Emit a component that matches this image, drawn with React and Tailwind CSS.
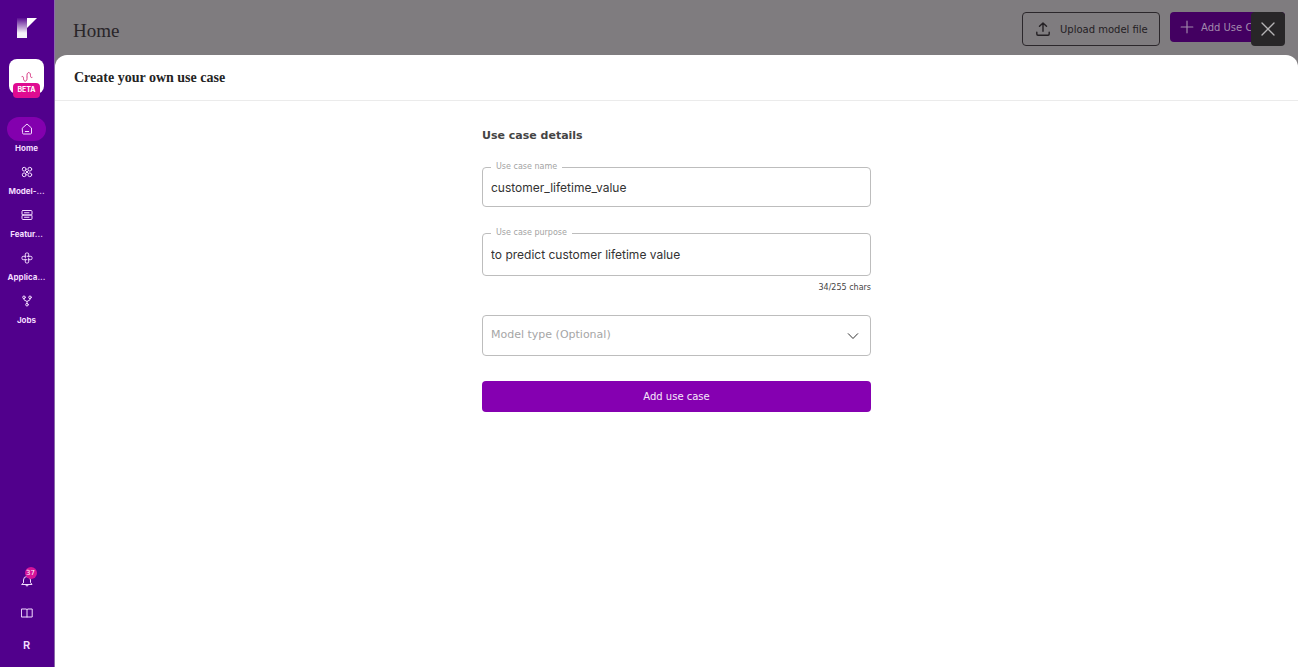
import { useState } from 'react';

const fonts = {
  sans: "font-[Inter,'Liberation_Sans',sans-serif]",
  serif: "font-['Liberation_Serif',serif]",
  wide: "font-['DejaVu_Sans',sans-serif]",
};

function Icon({ size = 12, strokeWidth = 1, children, className = '' }) {
  return (
    <svg
      width={size}
      height={size}
      viewBox="0 0 12 12"
      fill="none"
      stroke="currentColor"
      strokeWidth={strokeWidth}
      strokeLinecap="round"
      strokeLinejoin="round"
      className={className}
      aria-hidden="true"
    >
      {children}
    </svg>
  );
}

function Logo() {
  return (
    <svg width="20" height="21" viewBox="0 0 20 21" aria-hidden="true">
      <defs>
        <linearGradient id="logo-fade" x1="0" y1="0" x2="0" y2="1">
          <stop offset="0" stopColor="#fff" stopOpacity="0.05" />
          <stop offset="0.75" stopColor="#fff" stopOpacity="0.95" />
        </linearGradient>
      </defs>
      <path d="M0 1h10v20H0z" fill="url(#logo-fade)" />
      <path d="M10 1h10L10 11z" fill="#fff" />
    </svg>
  );
}

const navItems = [
  {
    label: 'Home',
    active: true,
    icon: (
      <>
        <path d="M1.500 5 6 1l4.500 4v5a1 1 0 0 1-1 1h-7a1 1 0 0 1-1-1z" />
        <path d="M4.300 8.500h3.400" />
      </>
    ),
  },
  {
    label: 'Model-...',
    icon: (
      <>
        <circle cx="3.200" cy="3.200" r="1.900" />
        <circle cx="8.800" cy="3.200" r="1.900" />
        <circle cx="3.200" cy="8.800" r="1.900" />
        <circle cx="8.800" cy="8.800" r="1.900" />
        <path d="M4.600 4.600l2.800 2.800M7.400 4.600 4.600 7.400" />
      </>
    ),
  },
  {
    label: 'Featur...',
    icon: (
      <>
        <rect x="1" y="1.500" width="10" height="4.500" rx="1" />
        <rect x="1" y="6" width="10" height="4.500" rx="1" />
        <path d="M3.500 3.750h4.500M3.500 8.250h4.500" />
      </>
    ),
  },
  {
    label: 'Applica...',
    icon: (
      <>
        <path d="M4.300 6V2.200A1.200 1.200 0 0 1 5.500 1h1a1.200 1.200 0 0 1 1.200 1.200v2.100" />
        <path d="M6 4.300h3.800A1.200 1.200 0 0 1 11 5.500v1a1.200 1.200 0 0 1-1.200 1.200H7.700" />
        <path d="M7.700 6v3.800A1.200 1.200 0 0 1 6.500 11h-1a1.200 1.200 0 0 1-1.200-1.200V7.700" />
        <path d="M6 7.700H2.200A1.200 1.200 0 0 1 1 6.500v-1a1.200 1.200 0 0 1 1.200-1.200h2.100" />
      </>
    ),
  },
  {
    label: 'Jobs',
    icon: (
      <>
        <circle cx="3" cy="2.300" r="1.300" />
        <circle cx="9" cy="2.300" r="1.300" />
        <circle cx="6" cy="9.700" r="1.300" />
        <path d="M3 3.600v1.200L6 6.500l3-1.700V3.600M6 6.500v1.900" />
      </>
    ),
  },
];

function NavItem({ label, icon, active }) {
  return (
    <a href="#" className="flex flex-col items-center gap-px" aria-current={active ? 'page' : undefined}>
      <span className={`flex h-6 w-[39px] items-center justify-center rounded-full ${active ? 'bg-[#8300ae]' : ''}`}>
        <Icon>{icon}</Icon>
      </span>
      <span className="text-[8px] leading-3 font-bold whitespace-nowrap">{label}</span>
    </a>
  );
}

function Sidebar() {
  return (
    <aside className="flex w-[55px] shrink-0 flex-col items-center border-r border-[#8a6aa8] bg-[#51008c] pt-[17px] pr-px pb-4 text-[#f3dcff]">
      <Logo />
      <button type="button" aria-label="Beta" className="relative mt-[21px] flex h-[35px] w-[35px] items-center justify-center rounded-lg bg-white text-[#d6307e]">
        <Icon>
          <path d="M1 5.500c1-.5 1.500.5 1.500 2 0 3.500 3.500 3.500 3.500 0v-3c0-4 3.500-4 3.500 0 0 1.500.5 2.500 1.500 2" />
        </Icon>
        <span className="absolute top-6 left-1 flex h-[15px] w-[27px] items-center justify-center rounded bg-[#df0b91] text-[7px] font-bold text-white">
          BETA
        </span>
      </button>
      <nav className="mt-[23px] flex flex-col gap-[6px]">
        {navItems.map((item) => (
          <NavItem key={item.label} {...item} />
        ))}
      </nav>
      <div className="mt-auto flex flex-col items-center gap-5">
        <button type="button" aria-label="Notifications" className="relative">
          <Icon>
            <path d="M1 9.500h10L9.500 7.500V5a3.500 3.500 0 0 0-7 0v2.500zM4.700 9.700a1.300 1.300 0 0 0 2.600 0M6 .8v.7" />
          </Icon>
          <span className={`${fonts.wide} absolute -top-2 left-1 flex h-3 w-3 items-center justify-center rounded-full bg-[#d4149a] text-[7px] text-white`}>
            37
          </span>
        </button>
        <button type="button" aria-label="Documentation">
          <Icon>
            <path d="M.8 2H5a1 1 0 0 1 1 1 1 1 0 0 1 1-1h4.200v8H.8zM6 3v7" />
          </Icon>
        </button>
        <button type="button" className="text-[11px] leading-3 font-semibold">R</button>
      </div>
    </aside>
  );
}

function TopBar() {
  return (
    <header className="relative flex h-[55px] shrink-0 items-start justify-between pt-3 pr-[13px] pl-[18px]">
      <h1 className={`${fonts.serif} text-[19px] leading-[38px] text-[#292529]`}>Home</h1>
      <div className={`${fonts.wide} flex items-start gap-[10px] text-[10px]`}>
        <button type="button" className="flex h-[34px] w-[138px] items-center gap-[10px] rounded border border-[#2b272b] pl-[13px] whitespace-nowrap text-[#242024]">
          <Icon size={14} strokeWidth={1.2} className="shrink-0">
            <path d="M6 8V1M3 3.700 6 .8l3 2.900M.7 8.700v1.600a1 1 0 0 0 1 1h8.600a1 1 0 0 0 1-1V8.700" />
          </Icon>
          Upload model file
        </button>
        <button type="button" className="flex h-[30px] w-[115px] items-center gap-[7px] overflow-hidden rounded bg-[#430061] pl-[10px] whitespace-nowrap text-[#a28aac]">
          <Icon size={14} className="shrink-0">
            <path d="M6 1v10M1 6h10" />
          </Icon>
          Add Use Case
        </button>
      </div>
      <button type="button" aria-label="Close" className="absolute top-3 right-[13px] flex h-[34px] w-[34px] items-center justify-center rounded bg-[#282628] text-[#b5b3b5]">
        <Icon size={16}>
          <path d="M1.500 1.500l9 9M10.500 1.500l-9 9" />
        </Icon>
      </button>
    </header>
  );
}

function Field({ id, label, height, value, onChange }) {
  return (
    <fieldset className="min-w-0 rounded border border-[#bdbdbd] px-2">
      <legend className={`${fonts.wide} h-[10px] px-[5px] text-[8px] leading-[10px] text-[#a3a3a3]`}>
        <label htmlFor={id}>{label}</label>
      </legend>
      <input
        id={id}
        value={value}
        onChange={(e) => onChange(e.target.value)}
        className={`block w-full bg-transparent pb-1 text-[12px] text-[#333] outline-none ${height}`}
      />
    </fieldset>
  );
}

function UseCaseForm() {
  const [name, setName] = useState('customer_lifetime_value');
  const [purpose, setPurpose] = useState('to predict customer lifetime value');

  return (
    <form className="mx-auto flex w-full max-w-[389px] flex-col pt-[26px]" onSubmit={(e) => e.preventDefault()}>
      <h3 className={`${fonts.wide} mb-[17px] text-[11px] leading-[18px] font-bold text-[#444]`}>Use case details</h3>
      <div className="flex flex-col gap-[21px]">
        <Field id="name" label="Use case name" height="h-[34px]" value={name} onChange={setName} />
        <Field id="purpose" label="Use case purpose" height="h-[37px]" value={purpose} onChange={setPurpose} />
      </div>
      <p className={`${fonts.wide} mt-[6px] text-right text-[8px] leading-3 text-[#444]`}>{purpose.length}/255 chars</p>
      <div className="mt-[21px] flex items-center rounded border border-[#bdbdbd] pr-[11px]">
        <select
          aria-label="Model type (Optional)"
          defaultValue=""
          className={`${fonts.wide} h-[39px] flex-1 appearance-none bg-transparent pl-2 text-[11px] text-[#a6a6a6] outline-none`}
        >
          <option value="">Model type (Optional)</option>
          <option>Classification</option>
          <option>Regression</option>
        </select>
        <Icon className="pointer-events-none text-[#333]">
          <path d="M1.300 3.700 6 8.500l4.700-4.800" />
        </Icon>
      </div>
      <button type="submit" className={`${fonts.wide} mt-[25px] h-[31px] rounded bg-[#8500b1] text-[10px] text-[#f7e8fb]`}>
        Add use case
      </button>
    </form>
  );
}

export default function App() {
  return (
    <div className={`${fonts.sans} flex min-h-screen bg-[#7f7c7f]`}>
      <Sidebar />
      <main className="flex min-w-0 flex-1 flex-col">
        <TopBar />
        <section className="flex-1 rounded-t-xl bg-white">
          <h2 className={`${fonts.serif} border-b border-[#ebebeb] pl-[19px] text-[14px] leading-[45px] font-bold text-[#242424]`}>
            Create your own use case
          </h2>
          <UseCaseForm />
        </section>
      </main>
    </div>
  );
}
